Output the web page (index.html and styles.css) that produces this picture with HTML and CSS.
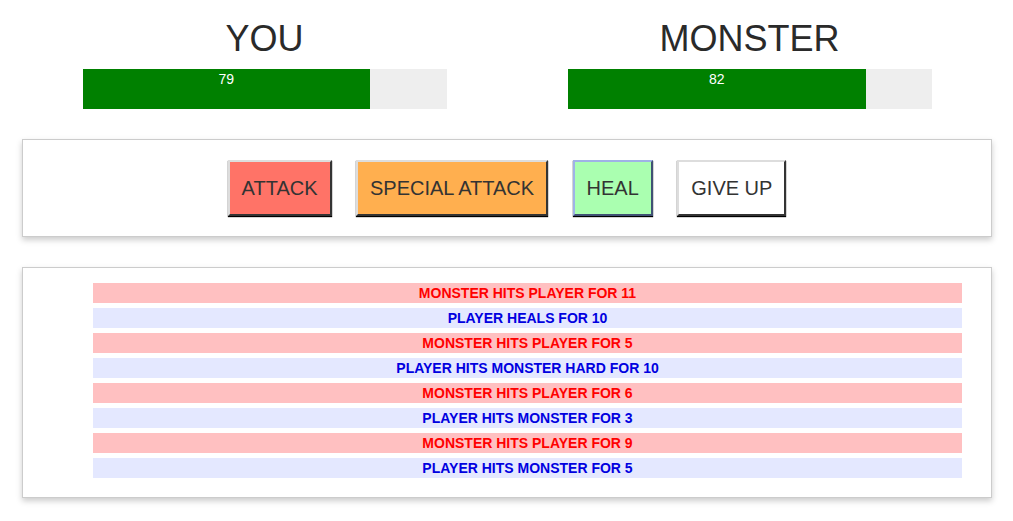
FILE: index.html
```html
<!DOCTYPE html>
<html>
<head>
<meta charset="utf-8">
<link rel="stylesheet" href="styles.css">
</head>
<body>
<div class="app">
  <section class="row">
    <div class="col">
      <h1 class="title">YOU</h1>
      <div class="healthbar">
        <div class="health" style="width: 79%">79</div>
      </div>
    </div>
    <div class="col">
      <h1 class="title">MONSTER</h1>
      <div class="healthbar">
        <div class="health" style="width: 82%">82</div>
      </div>
    </div>
  </section>
  <section class="controls">
    <button class="btn attack">ATTACK</button>
    <button class="btn special">SPECIAL ATTACK</button>
    <button class="btn heal">HEAL</button>
    <button class="btn giveup">GIVE UP</button>
  </section>
  <section class="log">
    <ul class="log-list">
      <li class="monster-turn">Monster hits Player for 11</li>
      <li class="player-turn">Player heals for 10</li>
      <li class="monster-turn">Monster hits Player for 5</li>
      <li class="player-turn">Player hits Monster hard for 10</li>
      <li class="monster-turn">Monster hits Player for 6</li>
      <li class="player-turn">Player hits Monster for 3</li>
      <li class="monster-turn">Monster hits Player for 9</li>
      <li class="player-turn">Player hits Monster for 5</li>
    </ul>
  </section>
</div>
</body>
</html>
```
FILE: styles.css
```css
html, body {
  margin: 0;
  padding: 0;
  background: #fff;
  font-family: "Liberation Sans", Arial, sans-serif;
  color: #222;
}

.app {
  width: 970px;
  padding-left: 22px;
  padding-bottom: 20px;
}

.row {
  display: flex;
}

.col {
  flex: 1;
  padding: 0 15px;
  text-align: center;
}

.title {
  font-size: 36px;
  font-weight: normal;
  line-height: 44px;
  margin: 17px 0 8px;
  color: #2a2a2a;
}

.healthbar {
  width: 80%;
  height: 40px;
  margin: 0 auto;
  background-color: #eee;
}

.health {
  height: 40px;
  background-color: green;
  color: #fff;
  font-size: 14px;
  line-height: 20px;
  text-align: center;
}

.controls, .log {
  margin-top: 30px;
  text-align: center;
  padding: 10px;
  border: 1px solid #ccc;
  box-shadow: 0 3px 6px #ccc;
}

.btn {
  font-family: "Liberation Sans", Arial, sans-serif;
  font-size: 20px;
  line-height: 28px;
  padding: 12px 12px;
  margin: 10px;
  color: #333;
  border: 2px outset #ddd;
  border-right-color: #888;
  border-bottom-color: #888;
  box-shadow: 0 1px 1px #000;
  vertical-align: top;
}

.attack { background-color: #ff7367; }
.special { background-color: #ffaf4f; }
.heal {
  background-color: #aaffb0;
  border-color: #9fb3e6 #6f8cc8 #6f8cc8 #9fb3e6;
}
.giveup { background-color: #ffffff; }

.log-list {
  list-style: none;
  margin: 0 14px 0 55px;
  padding: 0 0 4px;
  font-family: "Liberation Sans", Arial, sans-serif;
  font-weight: bold;
  font-size: 14px;
  line-height: 20px;
  text-transform: uppercase;
}

.log-list li {
  margin: 5px;
}

.player-turn {
  color: #0000e0;
  background-color: #e4e8ff;
}

.monster-turn {
  color: #ff0000;
  background-color: #ffc0c1;
}
```
